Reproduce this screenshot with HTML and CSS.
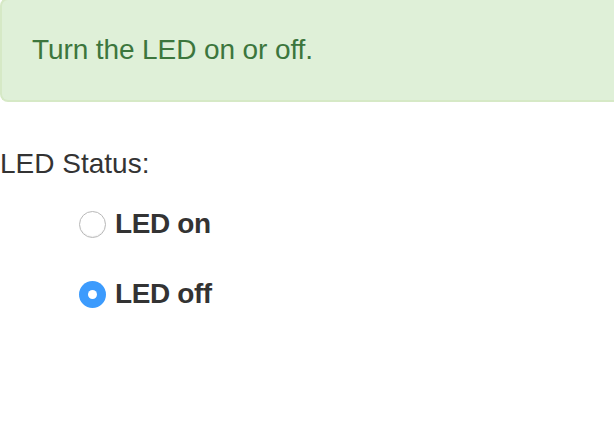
FILE: index.html
```html
<!DOCTYPE html>
<html>
<head>
<meta charset="utf-8">
<link rel="stylesheet" href="styles.css">
</head>
<body>
<div class="alert">Turn the LED on or off.</div>
<div class="status">LED Status:</div>
<div class="options">
  <label class="opt"><input type="radio" name="led" class="radio"><span>LED on</span></label>
  <label class="opt"><input type="radio" name="led" class="radio" checked><span>LED off</span></label>
</div>
</body>
</html>
```
FILE: styles.css
```css
html, body {
  margin: 0;
  padding: 0;
  background: #fff;
  overflow: hidden;
}
body {
  font-family: "Liberation Sans", Arial, Helvetica, sans-serif;
  font-size: 28px;
  line-height: 40px;
  color: #333;
}
.alert {
  margin-top: -2px;
  padding: 30px;
  background: #dff0d8;
  border: 2px solid #d6e9c6;
  border-right: none;
  border-radius: 8px 0 0 8px;
  color: #3c763d;
  letter-spacing: -0.1px;
}
.status {
  margin-top: 42px;
}
.options {
  display: flex;
  flex-direction: column;
  gap: 30px;
  margin-top: 20px;
  padding-left: 79px;
}
.opt {
  display: flex;
  align-items: center;
  gap: 9px;
  font-weight: bold;
  letter-spacing: -0.4px;
}
.radio {
  appearance: none;
  -webkit-appearance: none;
  margin: 0;
  width: 27px;
  height: 27px;
  border-radius: 50%;
  box-sizing: border-box;
  border: 1px solid #b8b8b8;
  background: #fff;
  box-shadow: inset 0 -1px 1px rgba(0,0,0,0.06);
  display: flex;
  align-items: center;
  justify-content: center;
}
.radio:checked {
  border: none;
  background: #3c9bfd;
  box-shadow: none;
}
.radio:checked::after {
  content: "";
  width: 9px;
  height: 9px;
  border-radius: 50%;
  background: #fff;
}
```
